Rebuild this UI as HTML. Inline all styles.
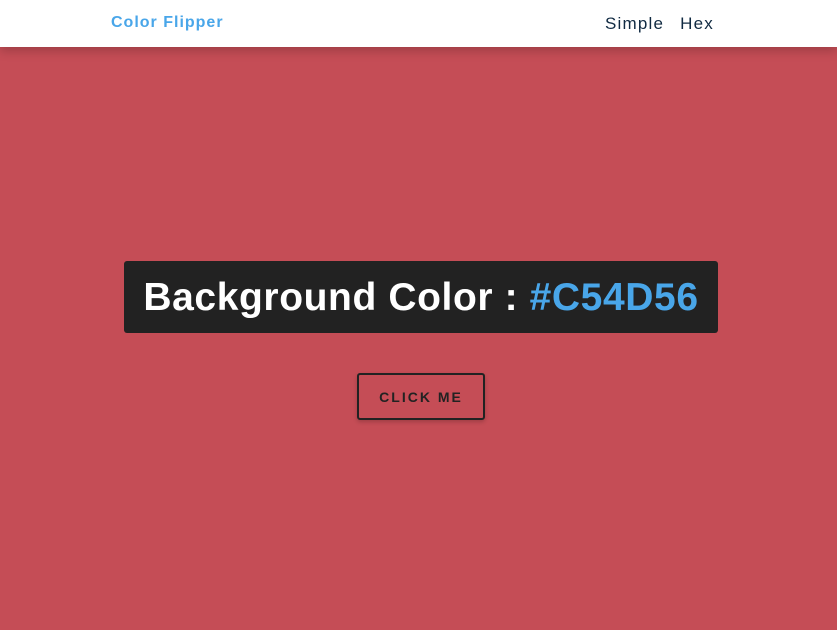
<!DOCTYPE html>
<html><head><style>
html,body{margin:0;padding:0;width:837px;height:630px;overflow:hidden;background:#C54D56;font-family:"Liberation Sans",sans-serif}
nav{position:absolute;left:0;top:0;width:837px;height:47px;background:#fff;box-shadow:0 4px 10px rgba(0,0,0,0.2)}
.logo{position:absolute;left:111px;top:14px;color:#49a6e9;font-weight:bold;font-size:16px;letter-spacing:1px}
.links{position:absolute;left:605px;top:14px;color:#102a42;font-size:17px;letter-spacing:1.2px}
.links span{margin-right:16px}
.box{position:absolute;left:124px;top:261px;width:594px;height:72px;background:#222;border-radius:3px;color:#fff;font-weight:bold;font-size:39px;letter-spacing:0.6px;text-align:center;line-height:74px}
.box b{color:#49a6e9}
.btn{position:absolute;left:357px;top:373px;width:124px;height:43px;border:2px solid #222;border-radius:3px;color:#222;font-weight:bold;font-size:14px;letter-spacing:2px;text-align:center;line-height:45px;box-shadow:0 2px 4px rgba(0,0,0,0.2)}
</style></head><body>
<nav><div class="logo">Color Flipper</div><div class="links"><span>Simple</span>Hex</div></nav>
<div class="box">Background Color : <b>#C54D56</b></div>
<div class="btn">CLICK ME</div>
</body></html>
